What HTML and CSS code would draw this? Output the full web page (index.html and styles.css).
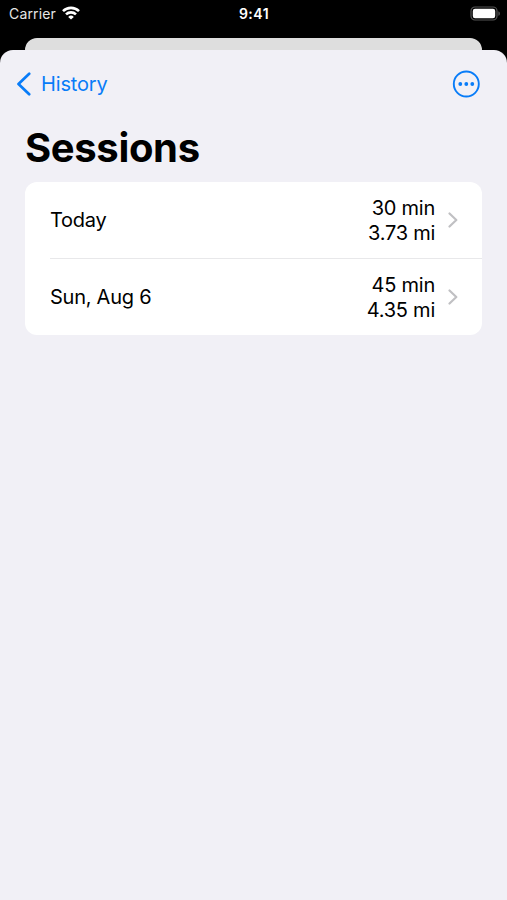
FILE: index.html
```html
<!DOCTYPE html>
<html lang="en">
<head>
  <meta charset="UTF-8" />
  <meta name="viewport" content="width=device-width, initial-scale=1.0"/>
  <title>Sessions</title>
  <link rel="stylesheet" href="styles.css">
</head>
<body>
  <header class="status-bar">
    <div class="carrier">
      <span>Carrier</span>
      <svg class="wifi" viewBox="0 0 18 14" width="18" height="14">
        <g fill="none" stroke="#fff" stroke-width="2.6">
          <path d="M1 5.1a11.5 11.5 0 0 1 16 0" />
          <path d="M4 8.400a7.200 7.200 0 0 1 10 0" />
        </g>
        <path d="M9 13.6L6.2 10.900a4.100 4.100 0 0 1 5.600 0z" fill="#fff" />
      </svg>
    </div>
    <div class="time">9:41</div>
    <svg class="battery" viewBox="0 0 31 15" width="31" height="15">
      <rect x="1" y="1" width="26" height="13" rx="4" fill="none" stroke="#555" stroke-width="1.2" />
      <rect x="2.8" y="2.8" width="22.4" height="9.4" rx="2.2" fill="#fff" />
      <path d="M28.4 5.2c2 .8 2 3.8 0 4.6z" fill="#555" />
    </svg>
  </header>

  <div class="back-card"></div>

  <main class="sheet">
    <nav class="nav-bar">
      <a class="back" href="#">
        <svg viewBox="0 0 15 24" width="15" height="24">
          <path d="M13.2 1.7L2.500 12l10.700 10.300" fill="none" stroke="#087cf8" stroke-width="2.7" stroke-linecap="round" stroke-linejoin="round" />
        </svg>
        <span>History</span>
      </a>
      <button class="more" aria-label="More">
        <svg viewBox="0 0 28 28" width="28" height="28">
          <circle cx="14.3" cy="14" r="12.5" fill="none" stroke="#087cf8" stroke-width="1.9" />
          <g fill="#087cf8">
            <circle cx="8.3" cy="14" r="1.9" />
            <circle cx="14.3" cy="14" r="1.9" />
            <circle cx="20.3" cy="14" r="1.9" />
          </g>
        </svg>
      </button>
    </nav>

    <h1>Sessions</h1>

    <ul class="list">
      <li class="row">
        <span class="date">Today</span>
        <span class="stats">30 min<br>3.73 mi</span>
        <svg class="chevron" viewBox="0 0 10 16" width="10" height="16">
          <path d="M1.5 1.5L8.3 8l-6.8 6.5" />
        </svg>
      </li>
      <li class="row">
        <span class="date">Sun, Aug 6</span>
        <span class="stats">45 min<br>4.35 mi</span>
        <svg class="chevron" viewBox="0 0 10 16" width="10" height="16">
          <path d="M1.5 1.5L8.3 8l-6.8 6.5" />
        </svg>
      </li>
    </ul>
  </main>
</body>
</html>
```
FILE: styles.css
```css
* {
  box-sizing: border-box;
}

body {
  margin: 0;
  height: 100vh;
  display: flex;
  flex-direction: column;
  overflow: hidden;
  background: #000;
  color: #000;
  font-family: Inter, sans-serif;
}

.status-bar {
  height: 38px;
  padding: 0 6px 11px 9px;
  display: grid;
  grid-template-columns: 1fr auto 1fr;
  align-items: center;
  color: #fff;
}

.carrier {
  display: flex;
  align-items: center;
  gap: 6px;
  font-size: 14px;
  letter-spacing: 0.15px;
  color: #e6e6e6;
}

.wifi {
  margin-top: -1px;
}

.time {
  margin-right: 2px;
  font-size: 14px;
  font-weight: 600;
  letter-spacing: 0.5px;
}

.battery {
  justify-self: end;
  margin-top: -1px;
}

.back-card {
  height: 12px;
  margin: 0 25px;
  border-radius: 12px 12px 0 0;
  background: #dedede;
}

.sheet {
  flex: 1;
  padding: 0 25px;
  border-radius: 13px 13px 0 0;
  background: #f1f0f6;
}

.nav-bar {
  height: 68px;
  margin: 0 -9px;
  display: flex;
  align-items: center;
  justify-content: space-between;
}

.back {
  display: flex;
  align-items: center;
  gap: 10px;
  color: #087cf8;
  font-size: 20px;
  letter-spacing: -0.15px;
  text-decoration: none;
}

.more {
  display: flex;
  margin-right: 11px;
  padding: 0;
  border: none;
  background: none;
}

h1 {
  margin: 5px 0 9px;
  font-size: 40px;
  line-height: 50px;
  font-weight: 700;
  letter-spacing: -0.35px;
}

.list {
  margin: 0;
  padding: 0;
  list-style: none;
  border-radius: 12px;
  background: #fff;
}

.row {
  height: 76px;
  margin-left: 25px;
  padding-right: 24px;
  display: flex;
  align-items: center;
  font-size: 20px;
  line-height: 25px;
  letter-spacing: -0.25px;
}

.row + .row {
  height: 77px;
  border-top: 1px solid #e8e8ea;
}

.date {
  padding-top: 1px;
}

.stats {
  margin-left: auto;
  padding-top: 2px;
  text-align: right;
}

.row + .row .stats {
  padding-top: 1px;
}

.chevron {
  margin-left: 13px;
  fill: none;
  stroke: #c0c0c3;
  stroke-width: 2.2;
  stroke-linecap: round;
  stroke-linejoin: round;
}
```
